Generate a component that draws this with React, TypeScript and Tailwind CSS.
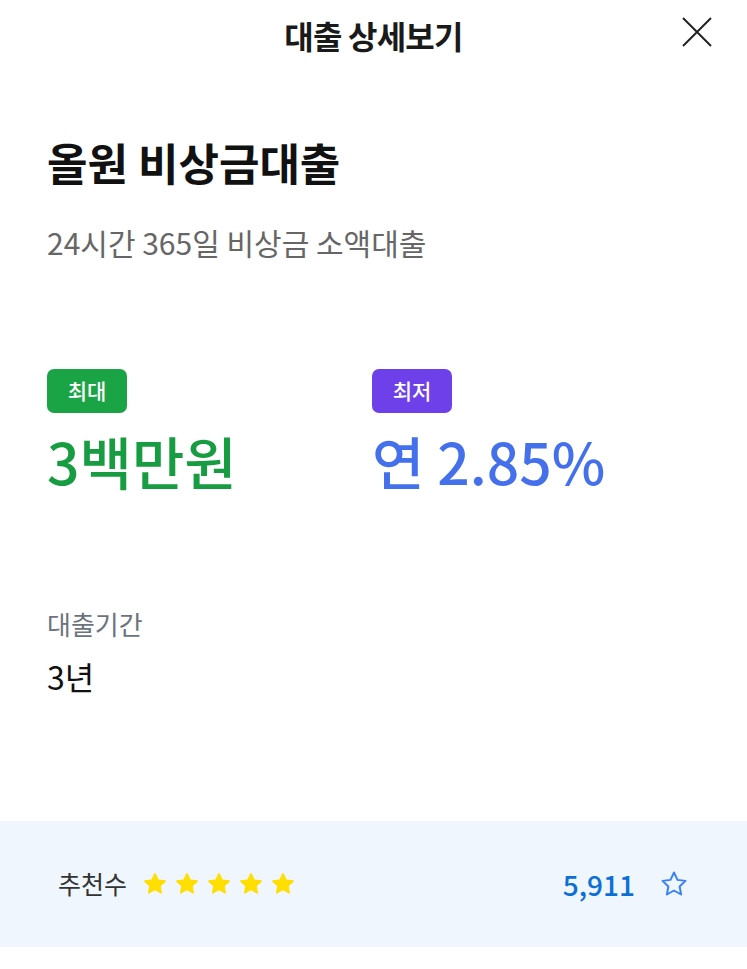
import React from 'react';

const Star = ({ className }: { className?: string }) => (
  <svg viewBox="0 0 24 24" className={className}>
    <path
      d="M12 1.8l3.1 6.4 7 .9-5.2 4.8 1.4 7L12 17.4l-6.3 3.5 1.4-7-5.2-4.8 7-.9z"
      fill="#ffde00"
      stroke="#ffde00"
      strokeWidth="1.6"
      strokeLinejoin="round"
    />
  </svg>
);

export default function App() {
  return (
    <div
      className="w-[747px] h-[969px] bg-white flex flex-col"
      style={{ fontFamily: '"Noto Sans CJK KR", "Noto Sans", sans-serif' }}
    >
      {/* header */}
      <div className="relative h-[70px] flex items-center justify-center">
        <h1 className="text-[32px] font-semibold text-[#1a1a1a] tracking-tight">대출 상세보기</h1>
        <button className="absolute right-[34px] top-[16px] w-[32px] h-[32px] flex items-center justify-center">
          <svg viewBox="0 0 32 32" className="w-[32px] h-[32px]">
            <path d="M2 2L30 30M30 2L2 30" stroke="#222" strokeWidth="2" fill="none" />
          </svg>
        </button>
      </div>

      {/* product */}
      <div className="px-[47px] pt-[64px]">
        <h2 className="text-[44px] font-bold text-[#111] leading-[56px]">올원 비상금대출</h2>
        <p className="mt-[34px] text-[30px] text-[#666] leading-[36px]">24시간 365일 비상금 소액대출</p>

        <div className="mt-[109px] grid grid-cols-[325px_1fr]">
          <div>
            <span className="inline-flex items-center justify-center w-[80px] h-[44px] rounded-[7px] bg-[#1ba446] text-white text-[21px] font-medium">
              최대
            </span>
            <div className="mt-[11px] text-[57px] font-medium text-[#189c41] leading-[72px]">3백만원</div>
          </div>
          <div>
            <span className="inline-flex items-center justify-center w-[80px] h-[44px] rounded-[7px] bg-[#6e40e9] text-white text-[21px] font-medium">
              최저
            </span>
            <div className="mt-[11px] text-[57px] font-medium text-[#4470ec] leading-[72px]">연 2.85%</div>
          </div>
        </div>

        <div className="mt-[112px] text-[26px] text-[#6b7380] leading-[32px]">대출기간</div>
        <div className="mt-[16px] text-[32px] text-[#111] leading-[40px]">3년</div>
      </div>

      {/* footer */}
      <div className="mt-auto mb-[22px] h-[126px] bg-[#eff6fd] flex items-center pl-[58px] pr-[58px]">
        <span className="text-[25px] text-[#333]">추천수</span>
        <div className="ml-[16px] flex gap-[8px]">
          <Star className="w-[24px] h-[24px]" />
          <Star className="w-[24px] h-[24px]" />
          <Star className="w-[24px] h-[24px]" />
          <Star className="w-[24px] h-[24px]" />
          <Star className="w-[24px] h-[24px]" />
        </div>
        <span className="ml-auto text-[28px] font-medium text-[#0b6fd6]">5,911</span>
        <svg viewBox="0 0 24 24" className="ml-[24px] w-[30px] h-[30px]">
          <path
            d="M12 2.8l2.8 5.9 6.4.8-4.7 4.5 1.2 6.4L12 17.2l-5.7 3.2 1.2-6.4-4.7-4.5 6.4-.8z"
            fill="none"
            stroke="#3b82f6"
            strokeWidth="1.6"
            strokeLinejoin="round"
          />
        </svg>
      </div>
    </div>
  );
}
